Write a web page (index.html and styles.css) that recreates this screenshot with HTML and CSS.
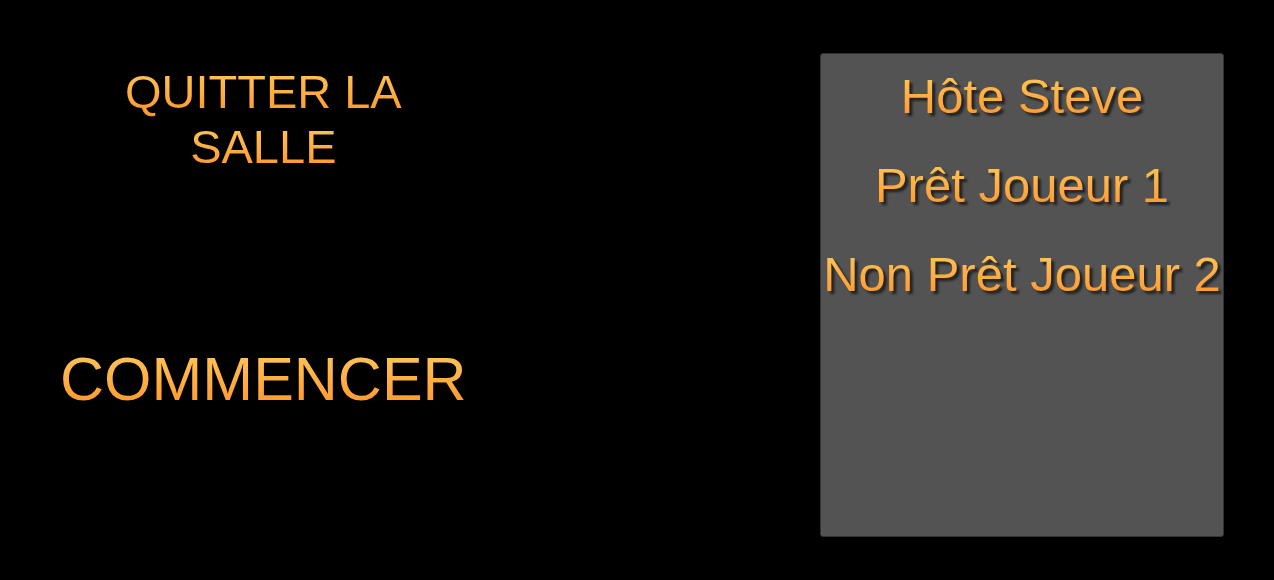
FILE: index.html
```html
<!DOCTYPE html>
<html lang="fr">
<head>
<meta charset="utf-8">
<meta name="viewport" content="width=device-width, initial-scale=1">
<title>Salle</title>
<link rel="stylesheet" href="styles.css">
</head>
<body>
<main class="lobby">
  <div class="actions">
    <button type="button" class="action action-leave"><span class="gold">QUITTER LA SALLE</span></button>
    <button type="button" class="action action-start"><span class="gold">COMMENCER</span></button>
  </div>
  <ul class="players">
    <li class="player"><span class="gold">Hôte Steve</span></li>
    <li class="player"><span class="gold">Prêt Joueur 1</span></li>
    <li class="player"><span class="gold">Non Prêt Joueur 2</span></li>
  </ul>
</main>
</body>
</html>
```
FILE: styles.css
```css
* { box-sizing: border-box; }
body {
  margin: 0;
  background: #000;
  font-family: "Liberation Sans", Arial, sans-serif;
}
.lobby {
  display: flex;
  justify-content: space-between;
  min-height: 100vh;
  padding: 53px 50px 43px 60px;
}
.actions {
  display: flex;
  flex-direction: column;
  align-items: center;
  gap: 170px;
  padding-top: 11px;
}
.action {
  padding: 0;
  border: 0;
  background: none;
  font-family: inherit;
  cursor: pointer;
}
.gold {
  display: inline-block;
  color: transparent;
  background: linear-gradient(#ffc454 15%, #ff9a32 85%);
  -webkit-background-clip: text;
  background-clip: text;
}
.action-leave {
  width: 320px;
  font-size: 47px;
  line-height: 55px;
}
/* One gradient per line of text */
.action-leave .gold {
  background-size: 100% 55px;
}
.action-start {
  font-size: 61px;
  line-height: 70px;
}
.players {
  width: 404px;
  margin: 0;
  padding: 14px 0;
  border: 1px solid #333;
  border-radius: 3px;
  background: #535353;
  list-style: none;
  text-align: center;
  white-space: nowrap;
}
.player {
  height: 56px;
  margin-bottom: 33px;
  font-size: 49px;
  line-height: 56px;
  filter: drop-shadow(3px 3px 1px rgba(0, 0, 0, 0.6));
}
```
